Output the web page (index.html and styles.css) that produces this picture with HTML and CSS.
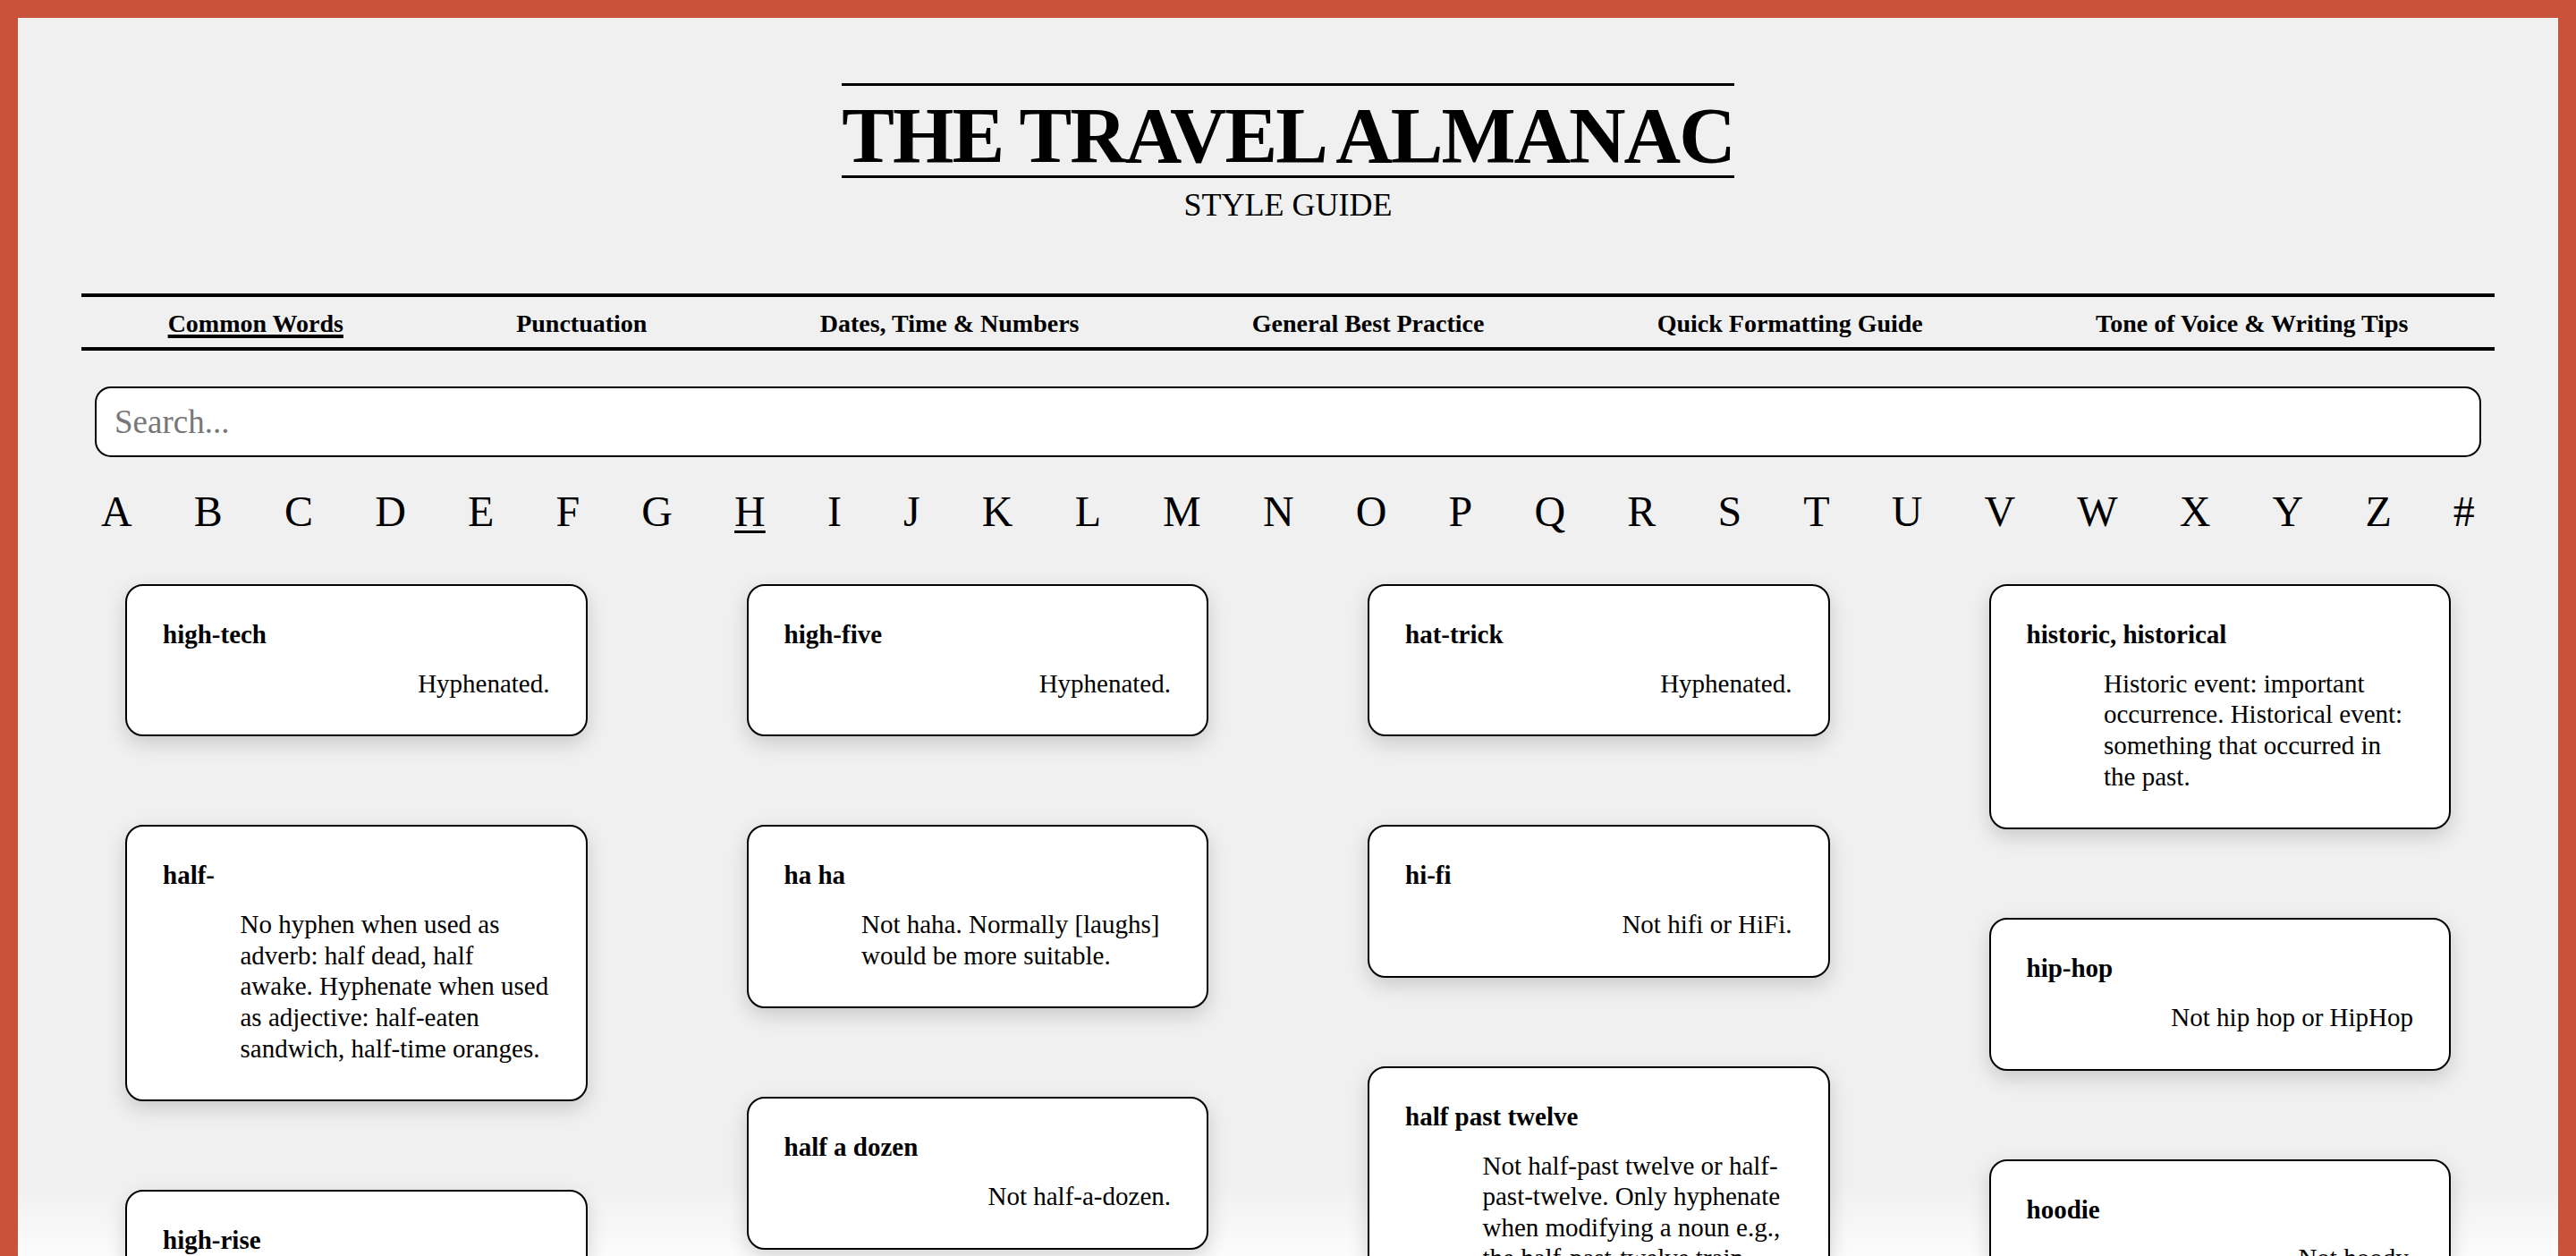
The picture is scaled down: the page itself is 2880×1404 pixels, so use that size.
FILE: index.html
```html
<!DOCTYPE html>
<html lang="en">
<head>
<meta charset="utf-8">
<title>The Travel Almanac – Style Guide</title>
<link rel="stylesheet" href="styles.css">
</head>
<body>
<div class="frame">
  <div class="page">
    <header class="masthead">
      <h1 class="title">THE TRAVEL ALMANAC</h1>
      <p class="subtitle">STYLE GUIDE</p>
    </header>
    <main class="content">
      <nav class="tabs">
        <a class="tab active" href="#">Common Words</a>
        <a class="tab" href="#">Punctuation</a>
        <a class="tab" href="#">Dates, Time &amp; Numbers</a>
        <a class="tab" href="#">General Best Practice</a>
        <a class="tab" href="#">Quick Formatting Guide</a>
        <a class="tab" href="#">Tone of Voice &amp; Writing Tips</a>
      </nav>
      <input class="search" type="text" placeholder="Search...">
      <div class="alphabet">
        <a href="#">A</a><a href="#">B</a><a href="#">C</a><a href="#">D</a><a href="#">E</a><a href="#">F</a><a href="#">G</a><a class="current" href="#">H</a><a href="#">I</a><a href="#">J</a><a href="#">K</a><a href="#">L</a><a href="#">M</a><a href="#">N</a><a href="#">O</a><a href="#">P</a><a href="#">Q</a><a href="#">R</a><a href="#">S</a><a href="#">T</a><a href="#">U</a><a href="#">V</a><a href="#">W</a><a href="#">X</a><a href="#">Y</a><a href="#">Z</a><a href="#">#</a>
      </div>
      <div class="cards">
        <div class="col">
          <article class="card"><h2 class="term">high-tech</h2><p class="desc">Hyphenated.</p></article>
          <article class="card"><h2 class="term">half-</h2><p class="desc">No hyphen when used as adverb: half dead, half awake. Hyphenate when used as adjective: half-eaten sandwich, half-time oranges.</p></article>
          <article class="card"><h2 class="term">high-rise</h2><p class="desc">Hyphenated.</p></article>
        </div>
        <div class="col">
          <article class="card"><h2 class="term">high-five</h2><p class="desc">Hyphenated.</p></article>
          <article class="card"><h2 class="term">ha ha</h2><p class="desc">Not haha. Normally [laughs] would be more suitable.</p></article>
          <article class="card"><h2 class="term">half a dozen</h2><p class="desc">Not half-a-dozen.</p></article>
        </div>
        <div class="col">
          <article class="card"><h2 class="term">hat-trick</h2><p class="desc">Hyphenated.</p></article>
          <article class="card"><h2 class="term">hi-fi</h2><p class="desc">Not hifi or HiFi.</p></article>
          <article class="card"><h2 class="term">half past twelve</h2><p class="desc">Not half-past twelve or half-past-twelve. Only hyphenate when modifying a noun e.g., the half-past-twelve train.</p></article>
        </div>
        <div class="col">
          <article class="card"><h2 class="term">historic, historical</h2><p class="desc">Historic event: important occurrence. Historical event: something that occurred in the past.</p></article>
          <article class="card"><h2 class="term">hip-hop</h2><p class="desc">Not hip hop or HipHop</p></article>
          <article class="card"><h2 class="term">hoodie</h2><p class="desc">Not hoody.</p></article>
        </div>
      </div>
    </main>
    <div class="fade"></div>
  </div>
</div>
</body>
</html>
```

FILE: styles.css
```css
* {
  box-sizing: border-box;
}

html,
body {
  margin: 0;
  padding: 0;
}

body {
  font-family: "Liberation Serif", "Times New Roman", serif;
  color: #000;
  background: #c8523a;
}

.frame {
  height: 100vh;
  overflow: hidden;
  padding: 20px 20px 0;
  background: #c8523a;
}

.page {
  position: relative;
  height: 100%;
  background: #f0f0f0;
  overflow: hidden;
}

/* Masthead */
.masthead {
  padding-top: 73px;
  text-align: center;
}

.title {
  display: block;
  width: fit-content;
  margin: 0 auto;
  padding-top: 11px;
  border-top: 3px solid #000;
  border-bottom: 3px solid #000;
  font-size: 88px;
  line-height: 89px;
  font-weight: 700;
  letter-spacing: -2px;
  white-space: nowrap;
}

.subtitle {
  margin: 10px 0 0;
  font-size: 36px;
  line-height: 41px;
  font-weight: 400;
}

/* Content */
.content {
  padding: 0 71px;
}

.tabs {
  display: flex;
  justify-content: space-around;
  margin-top: 78px;
  padding: 14px 0 10px;
  border-top: 4px solid #000;
  border-bottom: 4px solid #000;
}

.tab {
  color: #000;
  text-decoration: none;
  font-size: 28px;
  line-height: 32px;
  font-weight: 700;
  white-space: nowrap;
}

.tab.active {
  text-decoration: underline;
  text-decoration-thickness: 4px;
  text-underline-offset: 3px;
}

.search {
  display: block;
  width: calc(100% - 30px);
  height: 79px;
  margin: 40px 15px 0;
  padding: 0 20px;
  border: 2px solid #000;
  border-radius: 18px;
  background: #fff;
  font-family: "Liberation Serif", "Times New Roman", serif;
  font-size: 37px;
  color: #000;
  outline: none;
}

.search::placeholder {
  color: #777;
}

.alphabet {
  display: flex;
  justify-content: space-between;
  margin-top: 33px;
  padding: 0 22px;
  font-size: 48px;
  line-height: 55px;
}

.alphabet a {
  color: #000;
  text-decoration: none;
}

.alphabet a.current {
  text-decoration: underline;
  text-decoration-thickness: 3px;
  text-underline-offset: 5px;
}

/* Cards */
.cards {
  position: relative;
  z-index: 1;
  display: grid;
  grid-template-columns: repeat(4, 1fr);
  column-gap: 178px;
  align-items: start;
  margin-top: 54px;
  padding: 0 49px;
}

.col {
  display: flex;
  flex-direction: column;
  gap: 99px;
}

.card {
  display: flex;
  flex-direction: column;
  gap: 20px;
  margin: 0;
  padding: 37px 40px 40px;
  background: #fff;
  border: 2px solid #000;
  border-radius: 20px;
  box-shadow: 0 8px 22px rgba(0, 0, 0, 0.16);
}

.term {
  margin: 0;
  font-size: 29px;
  line-height: 34.8px;
  font-weight: 700;
}

.desc {
  align-self: flex-end;
  max-width: 346px;
  margin: 0;
  font-size: 29px;
  line-height: 34.6px;
  font-weight: 400;
}

.fade {
  position: absolute;
  left: 0;
  right: 0;
  bottom: 0;
  z-index: 0;
  height: 80px;
  background: linear-gradient(to bottom, rgba(255, 255, 255, 0), rgba(255, 255, 255, 0.8));
  pointer-events: none;
}
```
